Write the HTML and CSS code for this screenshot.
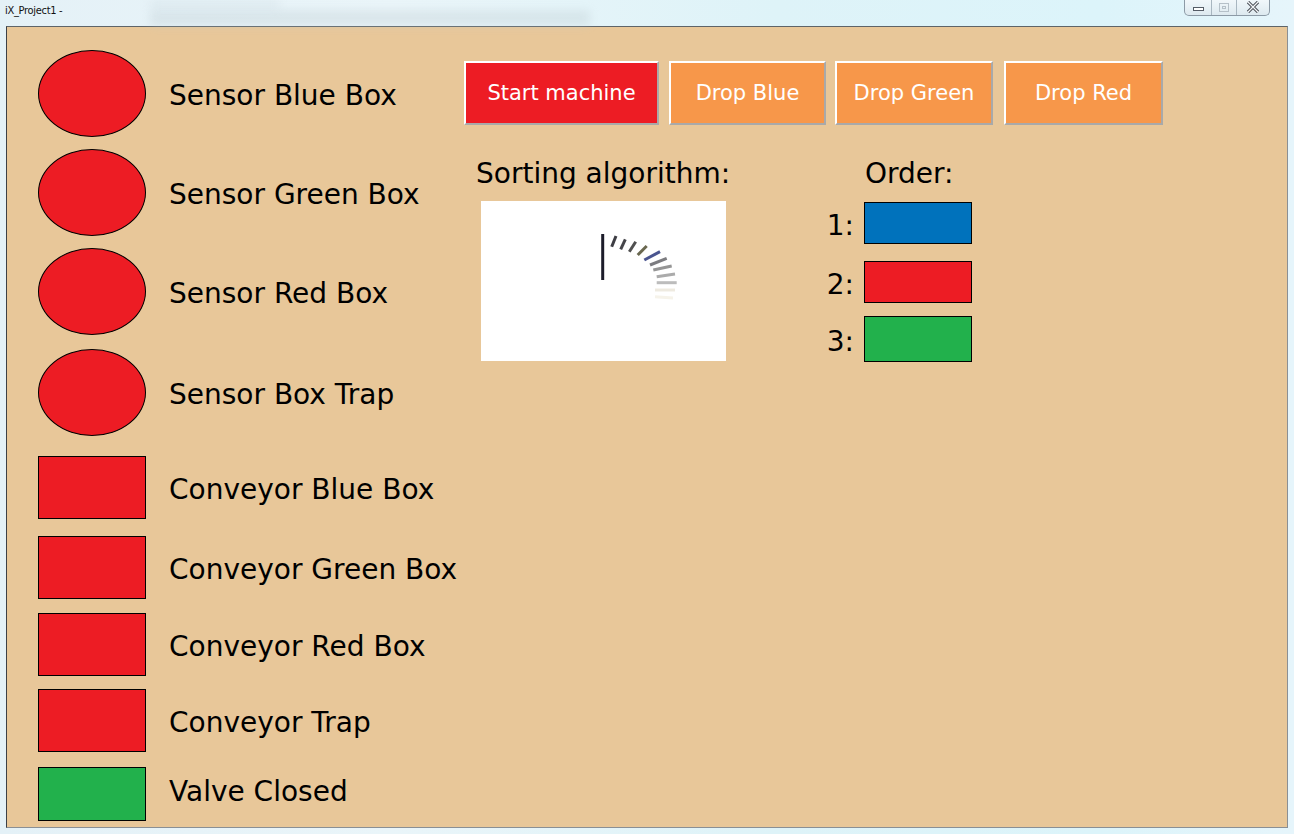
FILE: index.html
```html
<!DOCTYPE html>
<html>
<head>
<meta charset="utf-8">
<title>iX_Project1</title>
<link rel="stylesheet" href="styles.css">
</head>
<body>
<div class="window">
  <div class="titlebar">
    <span class="title">iX_Project1 -</span>
    <div class="blur blur-a"></div>
    <div class="blur blur-b"></div>
    <div class="wincontrols">
      <div class="wc wc-min"><span class="min-glyph"></span></div>
      <div class="wc wc-max"><span class="max-glyph"><span class="max-inner"></span></span></div>
      <div class="wc wc-close">
        <svg width="14" height="12" viewBox="0 0 14 12"><path d="M2 1 L12 11 M12 1 L2 11" stroke="#4a4f57" stroke-width="3.2" fill="none"/><path d="M2 1 L12 11 M12 1 L2 11" stroke="#f4f6f8" stroke-width="1.2" fill="none"/></svg>
      </div>
    </div>
  </div>
  <div class="panel">
    <div class="status-col">
      <div class="item item-1"><div class="shape ellipse red"></div><span class="label">Sensor Blue Box</span></div>
      <div class="item item-2"><div class="shape ellipse red"></div><span class="label">Sensor Green Box</span></div>
      <div class="item item-3"><div class="shape ellipse red"></div><span class="label">Sensor Red Box</span></div>
      <div class="item item-4"><div class="shape ellipse red"></div><span class="label">Sensor Box Trap</span></div>
      <div class="item item-5"><div class="shape rect red"></div><span class="label">Conveyor Blue Box</span></div>
      <div class="item item-6"><div class="shape rect red"></div><span class="label">Conveyor Green Box</span></div>
      <div class="item item-7"><div class="shape rect red"></div><span class="label">Conveyor Red Box</span></div>
      <div class="item item-8"><div class="shape rect red"></div><span class="label">Conveyor Trap</span></div>
      <div class="item item-9"><div class="shape rect-short green"></div><span class="label label-raised">Valve Closed</span></div>
    </div>
    <div class="main-col">
      <div class="controls">
        <button class="btn btn-start">Start machine</button>
        <button class="btn btn-drop btn-blue">Drop Blue</button>
        <button class="btn btn-drop btn-green">Drop Green</button>
        <button class="btn btn-drop btn-red">Drop Red</button>
      </div>
      <div class="lower">
        <div class="sorting">
          <div class="heading">Sorting algorithm:</div>
          <div class="spinner-box">
            <svg class="spinner" width="245" height="160" viewBox="0 0 245 160">
              <line x1="121.7" y1="33" x2="121.7" y2="79" stroke="#1c1c2a" stroke-width="3"/>
              <line x1="130.7" y1="45.7" x2="135" y2="35" stroke="#3e3e44" stroke-width="3"/>
              <line x1="139.7" y1="48.3" x2="144.3" y2="38.3" stroke="#45454a" stroke-width="3"/>
              <line x1="148.3" y1="50.7" x2="154.7" y2="40.7" stroke="#505050" stroke-width="3"/>
              <line x1="156.7" y1="54" x2="165.7" y2="45" stroke="#6a6850" stroke-width="3"/>
              <line x1="163.3" y1="59" x2="179" y2="50.7" stroke="#4a5590" stroke-width="3"/>
              <line x1="169" y1="64" x2="185.7" y2="57.3" stroke="#7c7c80" stroke-width="3"/>
              <line x1="172.3" y1="69" x2="190.7" y2="65" stroke="#959595" stroke-width="3"/>
              <line x1="175.7" y1="75.7" x2="194" y2="73" stroke="#ababab" stroke-width="3"/>
              <line x1="175.7" y1="81.7" x2="195.7" y2="81.7" stroke="#bcbcbc" stroke-width="3"/>
              <line x1="174" y1="89" x2="194" y2="89" stroke="#eeeae0" stroke-width="3"/>
              <line x1="174" y1="95.7" x2="192" y2="97" stroke="#f6f3ea" stroke-width="3"/>
            </svg>
          </div>
        </div>
        <div class="order">
          <div class="order-head">Order:</div>
          <div class="num num-1">1:</div><div class="swatch sw-1 blue"></div>
          <div class="num num-2">2:</div><div class="swatch sw-2 red"></div>
          <div class="num num-3">3:</div><div class="swatch sw-3 green"></div>
        </div>
      </div>
    </div>
  </div>
</div>
</body>
</html>
```
FILE: styles.css
```css
* { box-sizing: border-box; }
html, body { margin: 0; padding: 0; }
body {
  width: 1294px;
  height: 834px;
  overflow: hidden;
  font-family: "DejaVu Sans", "Liberation Sans", sans-serif;
}
.window {
  width: 1294px;
  height: 834px;
  background: linear-gradient(90deg, #e4f1f7 0%, #eaf5f9 30%, #def3f8 60%, #dcf4fa 85%, #e6f5fb 100%);
  display: flex;
  flex-direction: column;
  position: relative;
}
.titlebar {
  height: 26px;
  position: relative;
  flex: none;
}
.title {
  position: absolute;
  left: 5px;
  top: 4px;
  font-family: "DejaVu Sans Condensed", "DejaVu Sans", sans-serif;
  font-size: 11px;
  letter-spacing: -0.3px;
  color: #111;
  z-index: 2;
}
.blur {
  position: absolute;
  filter: blur(5px);
  background: #b8c6cc;
}
.blur-a { left: 150px; top: 10px; width: 440px; height: 16px; opacity: 0.3; }
.blur-b { left: 150px; top: 0px; width: 130px; height: 8px; opacity: 0.2; }
.wincontrols {
  position: absolute;
  right: 24px;
  top: -1px;
  width: 86px;
  height: 17px;
  border: 1px solid #8c9aa6;
  border-top: none;
  border-radius: 0 0 5px 5px;
  display: flex;
  background: linear-gradient(#f2f8fb, #dde9ef);
}
.wc {
  display: flex;
  align-items: center;
  justify-content: center;
  height: 100%;
}
.wc-min { width: 27px; border-right: 1px solid #a8b6c0; }
.wc-max { width: 25px; border-right: 1px solid #a8b6c0; }
.wc-close { flex: 1; }
.min-glyph {
  width: 11px;
  height: 4px;
  border: 1px solid #555c66;
  background: #fff;
  margin-top: 3px;
}
.max-glyph {
  width: 10px;
  height: 9px;
  border: 1px solid #b5c0c8;
  display: flex;
  align-items: center;
  justify-content: center;
}
.max-inner {
  width: 4px;
  height: 3px;
  border: 1px solid #b5c0c8;
}
.panel {
  flex: none;
  margin: 0 6px;
  width: 1282px;
  height: 802px;
  background: #e8c799;
  border: 1px solid #5e6468;
  border-left-color: #3c4046;
  border-right-color: #8a8f94;
  border-bottom-color: #8a8f94;
  display: flex;
  padding: 23px 0 0 31px;
}
.status-col {
  width: 426px;
  flex: none;
  display: flex;
  flex-direction: column;
}
.item {
  display: flex;
  align-items: center;
  gap: 23px;
}
.item-2 { margin-top: 12px; }
.item-3 { margin-top: 12px; }
.item-4 { margin-top: 14px; }
.item-5 { margin-top: 20px; }
.item-6 { margin-top: 17px; }
.item-7 { margin-top: 14px; }
.item-8 { margin-top: 13px; }
.item-9 { margin-top: 15px; }
.shape {
  width: 108px;
  flex: none;
  border: 1px solid #000;
}
.ellipse { height: 87px; border-radius: 50%; }
.rect { height: 63px; border-width: 1.5px; }
.rect-short { height: 54px; border-width: 1.5px; }
.red { background: #ed1c24; }
.green { background: #22b14c; }
.blue { background: #0072bc; }
.label {
  font-size: 28px;
  color: #000;
  white-space: nowrap;
  line-height: 32px;
  padding-top: 5px;
}
.label-raised {
  padding-top: 0;
  padding-bottom: 4px;
}
.main-col {
  flex: 1;
  display: flex;
  flex-direction: column;
  padding-top: 11px;
}
.controls {
  display: flex;
  height: 64px;
}
.btn {
  height: 64px;
  font-family: "DejaVu Sans", sans-serif;
  font-size: 21px;
  color: #fff;
  border-style: solid;
  border-width: 2px;
  border-color: #ffffff #a9a9a9 #a9a9a9 #ffffff;
  padding: 0;
  margin: 0;
  cursor: pointer;
}
.btn-start { width: 195px; background: #ed1c24; }
.btn-drop { background: #f7974a; }
.btn-blue { width: 157px; margin-left: 10px; }
.btn-green { width: 158px; margin-left: 9px; }
.btn-red { width: 159px; margin-left: 11px; }
.lower {
  display: flex;
  margin-top: 33px;
}
.sorting {
  width: 260px;
  margin-left: 12px;
  flex: none;
}
.heading, .order-head, .num {
  font-size: 28px;
  line-height: 32px;
  color: #000;
  white-space: nowrap;
}
.spinner-box {
  margin-top: 11px;
  margin-left: 5px;
  width: 245px;
  height: 160px;
  background: #fff;
}
.spinner { display: block; }
.order {
  margin-left: 92px;
  display: grid;
  grid-template-columns: 26px 108px;
  column-gap: 10px;
  align-items: center;
  align-content: start;
}
.order-head {
  grid-column: 2;
  margin-left: 1px;
  margin-bottom: 12px;
}
.num { justify-self: end; padding-top: 5px; }
.swatch { border: 1.5px solid #000; }
.sw-1 { height: 42px; }
.sw-2 { height: 42px; margin-top: 17px; }
.sw-3 { height: 46px; margin-top: 13px; }
.num-2 { margin-top: 17px; }
.num-3 { margin-top: 13px; }
```
